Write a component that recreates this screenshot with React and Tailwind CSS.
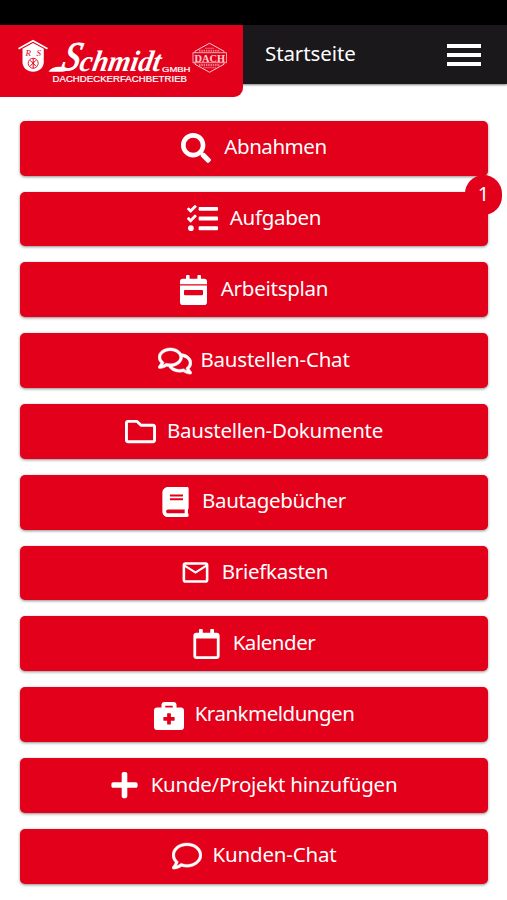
import { FaSearch, FaTasks, FaRegComments, FaRegFolder, FaBook, FaRegCalendar, FaBriefcaseMedical, FaPlus, FaRegComment } from 'react-icons/fa';
import { MdMailOutline } from 'react-icons/md';

const PlanIcon = ({ className }) => (
    <svg viewBox="0 0 27 30" fill="currentColor" fillRule="evenodd" className={className}>
        <path d="M6 1a1 1 0 0 1 1-1h1.600a1 1 0 0 1 1 1v2.800h7.800V1a1 1 0 0 1 1-1H20a1 1 0 0 1 1 1v2.800h3.200A2.800 2.800 0 0 1 27 6.600V9.300H0V6.600a2.800 2.800 0 0 1 2.800-2.800H6Z" />
        <path d="M0 10.500h27v16.700a2.800 2.800 0 0 1-2.800 2.800H2.800A2.800 2.800 0 0 1 0 27.200ZM5 15a1 1 0 0 0-1 1v3.300a1 1 0 0 0 1 1h17a1 1 0 0 0 1-1V16a1 1 0 0 0-1-1Z" />
    </svg>
);

const menuItems = [
    { label: 'Abnahmen', icon: FaSearch, size: 'w-[30px] h-[30px]', space: 'gap-[13px]', tracking: 'tracking-[-0.45px]' },
    { label: 'Aufgaben', icon: FaTasks, size: 'w-[31px] h-[31px]', space: 'gap-3', tracking: 'tracking-[-0.3px]', count: 1 },
    { label: 'Arbeitsplan', icon: PlanIcon, size: 'w-[27px] h-[30px]', space: 'gap-3.5', tracking: 'tracking-[-0.25px]' },
    { label: 'Baustellen-Chat', icon: FaRegComments, size: 'w-[34px] h-[30px] stroke-white stroke-[8px]', space: 'gap-2', tracking: 'tracking-[-0.2px]' },
    { label: 'Baustellen-Dokumente', icon: FaRegFolder, size: 'w-[31px] h-[31px]', space: 'gap-[11px]', tracking: 'tracking-[-0.25px]' },
    { label: 'Bautagebücher', icon: FaBook, size: 'w-[27px] h-[30px]', space: 'gap-[13px]', tracking: 'tracking-[-0.35px]' },
    { label: 'Briefkasten', icon: MdMailOutline, size: 'w-[31px] h-[31px]', space: 'gap-[11px]', tracking: 'tracking-[-0.3px]' },
    { label: 'Kalender', icon: FaRegCalendar, size: 'w-[27px] h-[30px]', space: 'gap-[13px]', tracking: 'tracking-[-0.45px]' },
    { label: 'Krankmeldungen', icon: FaBriefcaseMedical, size: 'w-[30px] h-[30px]', space: 'gap-[11px]', tracking: 'tracking-[-0.5px]' },
    { label: 'Kunde/Projekt hinzufügen', icon: FaPlus, size: 'w-[27px] h-[30px]', space: 'gap-[13px]', tracking: 'tracking-[-0.25px]' },
    { label: 'Kunden-Chat', icon: FaRegComment, size: 'w-[30px] h-[30px] stroke-white stroke-[6px]', space: 'gap-[11px]', tracking: 'tracking-[-0.2px]' },
];

function Logo() {
    return (
        <svg viewBox="0 0 243 71" className="w-full h-full" fill="white">
            {/* House crest */}
            <path d="M18.500 23.500 33 15.500 47.500 23.500" fill="none" stroke="white" strokeWidth="1.800" />
            <path d="M22.500 23.500 33 17.800 43.800 23.500V37c0 5-4.500 9.500-10.700 9.500S22.500 42 22.500 37Z" />
            <text x="25.500" y="30.500" fontSize="9" fontStyle="italic" fontFamily="Liberation Serif, serif" fill="#e2001a" textLength="15.500">RS</text>
            <circle cx="33.200" cy="38" r="5" fill="none" stroke="#e2001a" strokeWidth="0.900" />
            <path d="m30 35 6 6m0-6-6 6M33.200 33v10" fill="none" stroke="#e2001a" strokeWidth="1" />

            {/* Foot of the script initial */}
            <path d="M48.500 46.500c2.500-3.800 7-5.400 13-4.800l10 1.800c-3 2.500-10 3.300-15 3Z" />
            <text transform="translate(60.500 44.500) skewX(-14)" fontSize="41" fontStyle="italic" fontFamily="Liberation Serif, serif" stroke="white" strokeWidth="1" textLength="17.500" lengthAdjust="spacingAndGlyphs">S</text>
            <text transform="translate(78.500 45.500) skewX(-10)" fontSize="29.500" fontWeight="bold" fontStyle="italic" fontFamily="Liberation Serif, serif" textLength="81" lengthAdjust="spacingAndGlyphs">chmidt</text>
            <text x="162" y="46.500" fontSize="7.800" fontFamily="Liberation Sans, sans-serif" stroke="white" strokeWidth="0.200" textLength="28.500" lengthAdjust="spacingAndGlyphs">GMBH</text>
            <text x="52.500" y="57" fontSize="8.400" fontFamily="Liberation Sans, sans-serif" stroke="white" strokeWidth="0.200" textLength="134.500" lengthAdjust="spacingAndGlyphs">DACHDECKERFACHBETRIEB</text>

            {/* DACH guild seal */}
            <g opacity="0.800">
                <path d="M209.500 18 224 26V39L209.500 47 195 39V26Z" fill="none" stroke="white" strokeWidth="1" />
                <path d="M199 25.500h21M199 39.800h21" stroke="white" strokeWidth="2.200" strokeDasharray="1.500 0.800" opacity="0.600" />
                <path d="M203 42.500h13M205 23h9" stroke="white" strokeWidth="1" opacity="0.500" />
                <rect x="193" y="27.500" width="33.500" height="10" fill="#e2001a" stroke="white" strokeWidth="0.800" />
                <text x="194.500" y="36.300" fontSize="11" fontWeight="bold" fontFamily="Liberation Serif, serif" textLength="30.500" lengthAdjust="spacingAndGlyphs">DACH</text>
            </g>
        </svg>
    );
}

function MenuButton({ item }) {
    const Icon = item.icon;
    return (
        <button className={`relative flex items-center justify-center w-full h-[54.8px] rounded-[5px] bg-[#e2001a] text-white shadow-[0_1px_3px_rgba(0,0,0,0.45)] ${item.space}`}>
            <Icon className={`shrink-0 ${item.size}`} />
            <span className={`pb-[3.5px] text-[20.5px] leading-7 whitespace-nowrap ${item.tracking}`}>{item.label}</span>
            {item.count && (
                <span className="absolute -top-[17px] -right-3.5 flex items-center justify-center w-[37px] h-10 rounded-full bg-[#e2001a] pb-0.5 text-[20px]">
                    {item.count}
                </span>
            )}
        </button>
    );
}

export default function App() {
    return (
        <div className="h-[900px] overflow-hidden bg-white font-['Noto_Sans',sans-serif]">
            <div className="h-[25px] bg-black" />
            <header className="flex h-[59px] bg-[#1a181b] text-white shadow-[0_1px_2px_rgba(0,0,0,0.5)]">
                <div className="w-[243px] h-[71.5px] shrink-0 rounded-br-[9px] bg-[#e2001a]">
                    <Logo />
                </div>
                <h1 className="flex-1 pl-[22px] pt-3.5 text-[20.5px] leading-7 tracking-[-0.1px]">Startseite</h1>
                <button className="mr-[26px] flex flex-col justify-center gap-[5px]" aria-label="Menu">
                    <span className="block w-[34px] h-1 bg-white" />
                    <span className="block w-[34px] h-1 bg-white" />
                    <span className="block w-[34px] h-1 bg-white" />
                </button>
            </header>

            <main className="flex flex-col gap-4 pl-5 pr-[19px] pt-[36.8px]">
                {menuItems.map((item) => (
                    <MenuButton key={item.label} item={item} />
                ))}
            </main>
        </div>
    );
}
